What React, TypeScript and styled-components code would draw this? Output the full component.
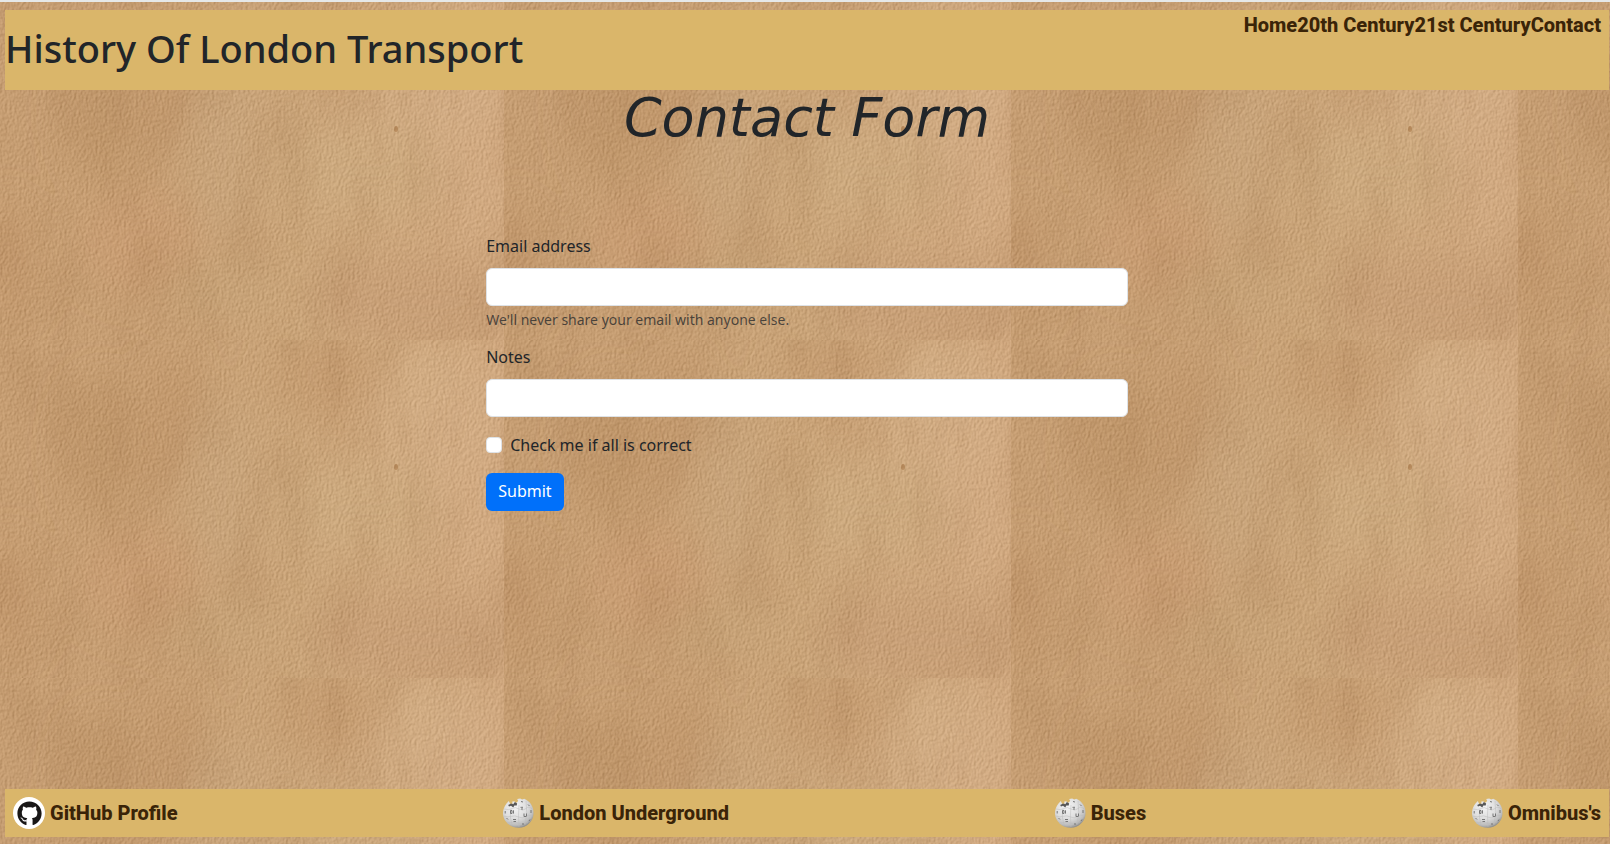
import React from "react";
import styled, { createGlobalStyle } from "styled-components";
import { FaGithub } from "react-icons/fa";

// One 507 x 338 sheet of kraft paper; it repeats over the whole page.
const paperSheet = `
<svg xmlns="http://www.w3.org/2000/svg" width="507" height="338" viewBox="0 0 507 338">
  <defs>
    <linearGradient id="base" x1="0" x2="1" y1="0" y2="0">
      <stop offset="0" stop-color="#c69e73"/>
      <stop offset=".3" stop-color="#c59d72"/>
      <stop offset=".6" stop-color="#c9a479"/>
      <stop offset="1" stop-color="#cea67d"/>
    </linearGradient>
    <filter id="soft" x="-50%" y="-50%" width="200%" height="200%"><feGaussianBlur stdDeviation="18"/></filter>
    <filter id="mottle" x="0" y="0" width="100%" height="100%" color-interpolation-filters="sRGB">
      <feTurbulence type="fractalNoise" baseFrequency=".026 .009" numOctaves="3" seed="8"/>
      <feColorMatrix values="0 0 0 0 .62  0 0 0 0 .45  0 0 0 0 .29  1.6 0 0 0 -.68"/>
    </filter>
    <filter id="grain" x="0" y="0" width="100%" height="100%" color-interpolation-filters="sRGB">
      <feTurbulence type="fractalNoise" baseFrequency=".42 .3" numOctaves="3" seed="3" result="n"/>
      <feColorMatrix in="n" values="0 0 0 0 0  0 0 0 0 0  0 0 0 0 0  1 0 0 0 0" result="h"/>
      <feDiffuseLighting in="h" surfaceScale="1" diffuseConstant="1" lighting-color="#fff" result="l">
        <feDistantLight azimuth="215" elevation="45"/>
      </feDiffuseLighting>
      <feComposite in="SourceGraphic" in2="l" operator="arithmetic" k1="0" k2="1" k3=".2" k4="-.137"/>
    </filter>
  </defs>
  <g filter="url(#grain)">
    <rect width="507" height="338" fill="url(#base)"/>
    <g filter="url(#soft)">
      <ellipse cx="105" cy="110" rx="34" ry="70" fill="#b98f63" opacity=".6"/>
      <ellipse cx="175" cy="80" rx="20" ry="70" fill="#bd9166" opacity=".6"/>
      <ellipse cx="330" cy="35" rx="55" ry="50" fill="#bf9469" opacity=".5"/>
      <ellipse cx="225" cy="150" rx="40" ry="90" fill="#c8a67b" opacity=".5"/>
      <ellipse cx="10" cy="260" rx="30" ry="60" fill="#bd9166" opacity=".5"/>
      <ellipse cx="145" cy="240" rx="60" ry="50" fill="#c99d73" opacity=".6"/>
      <ellipse cx="440" cy="70" rx="60" ry="70" fill="#d1ac84" opacity=".8"/>
      <ellipse cx="370" cy="170" rx="90" ry="45" fill="#ccaa7f" opacity=".7"/>
      <ellipse cx="475" cy="130" rx="45" ry="110" fill="#d1ac84" opacity=".55"/>
      <ellipse cx="430" cy="300" rx="110" ry="45" fill="#c79d75" opacity=".85"/>
      <ellipse cx="220" cy="285" rx="55" ry="30" fill="#c5a276" opacity=".6"/>
    </g>
    <rect width="507" height="338" filter="url(#mottle)" opacity=".24"/>
    <ellipse cx="399" cy="127" rx="2" ry="3" fill="#a07040" opacity=".6"/>
  </g>
</svg>`;

const ink = "#212529";
const brown = "#3a2408";
const brass = "#dab66a";

const GlobalStyle = createGlobalStyle`
  *, *::before, *::after { box-sizing: border-box; }
  body {
    margin: 0;
    border-top: 2px solid #e6e8e8;
    color: ${ink};
    font: 400 16px/24px "Noto Sans", "Open Sans", sans-serif;
    background: #c8a177 url("data:image/svg+xml,${encodeURIComponent(paperSheet).replace(/'/g, "%27")}") -3px 2px;
  }
`;

const Page = styled.div`
  min-height: calc(100vh - 2px);
  padding: 8px 1px 7px 5px;
  display: flex;
  flex-direction: column;
`;

const Header = styled.header`
  display: flex;
  justify-content: space-between;
  align-items: flex-start;
  background: ${brass};
`;

const SiteTitle = styled.h1`
  margin: 14px 0 18px;
  font-size: 38px;
  line-height: 48px;
  font-weight: 500;
`;

const Nav = styled.nav`
  display: flex;
  padding-right: 8px;
`;

const BoldLink = styled.a`
  display: flex;
  align-items: center;
  gap: 5px;
  color: ${brown};
  font-family: Roboto, "Noto Sans", sans-serif;
  font-size: 20px;
  line-height: 30px;
  font-weight: 800;
  text-decoration: none;
`;

const Main = styled.main`
  flex: 1;
`;

const PageTitle = styled.h2`
  margin: 0 0 88px;
  font: italic 400 54px/56px "DejaVu Sans", sans-serif;
  text-align: center;
`;

const Form = styled.form`
  width: 40%;
  margin: 0 auto;
  display: flex;
  flex-direction: column;
  gap: 16px;
`;

const Field = styled.div`
  display: flex;
  flex-direction: column;
`;

const Label = styled.label`
  margin-bottom: 10px;
`;

const Input = styled.input`
  width: 100%;
  height: 38px;
  padding: 6px 12px;
  border: 1px solid #dee2e6;
  border-radius: 6px;
  background: #fff;
  color: ${ink};
  font: inherit;
`;

const Hint = styled.small`
  margin: 3px 0 -1px;
  font-size: 14px;
  line-height: 21px;
  color: rgba(33, 37, 41, 0.75);
`;

const CheckRow = styled.label`
  display: flex;
  align-items: center;
  gap: 8px;
`;

const Checkbox = styled.input`
  appearance: none;
  width: 16px;
  height: 16px;
  margin: 0;
  border: 1px solid #dee2e6;
  border-radius: 4px;
  background: #fff;

  &:checked {
    background: #0d6efd;
  }
`;

const Submit = styled.button`
  align-self: flex-start;
  height: 38px;
  padding: 0 12px 2px;
  border: 0;
  border-radius: 6px;
  background: #0070fa;
  color: #fff;
  font: inherit;
`;

const Footer = styled.footer`
  display: flex;
  justify-content: space-between;
  align-items: center;
  padding: 8px;
  background: ${brass};
`;

const Badge = styled.span`
  display: flex;
  align-items: center;
  justify-content: center;
  width: 32px;
  height: 32px;
  border-radius: 50%;
  background: #fff;
  color: #191717;
`;

function WikiGlobe({ id }: { id: string }) {
  return (
    <svg width="32" height="32" viewBox="0 0 32 32" aria-hidden="true">
      <defs>
        <radialGradient id={id} cx=".4" cy=".3" r=".72">
          <stop offset="0" stopColor="#f4f4f4" />
          <stop offset=".55" stopColor="#dedede" />
          <stop offset=".85" stopColor="#bcbcbc" />
          <stop offset="1" stopColor="#8d8d8d" />
        </radialGradient>
      </defs>
      <path
        d="M4.5 6.5 6.8 4l1.4 3 2.6-.6L10 4.8l2.2-.5L14 6l2.2-2.1-1-1.9 3-.6 2 1.2 2-.8C28 4.200 32 9.500 31.500 17 31 25 24.500 30.700 17 30.800 8.500 31 1.500 24.500 1 17 .9 13 2.200 9.400 4.500 6.500Z"
        fill={`url(#${id})`}
      />
      <path d="m6.200 8 3-1.500 2 .8 1.700-2.200 2.200 1.300-.4 2-2.400.2-1 1.800-2.300-1.600-2 .7Z" fill="#575757" />
      <path
        d="M2 12q5 1.500 8-.5t7 .5 7-.5 6 .5M1.500 19q5 1.500 8 .3t7 .7 7-.5 7-.5M5 26q6-1.500 11 0t10-.5M9 12q-2 7 1 16M17 8q-1 10 0 22M24 4q2 12-1 24"
        fill="none"
        stroke="#bbb"
        strokeWidth=".5"
      />
      <g fill="none" stroke="#777" strokeWidth="1">
        <path d="M8.500 13.500h1.500v3H8.500ZM11.500 13.300v3.300M22 16.500v3M24.500 16.500v3M22 19.500h2M11 22.500h3M11.500 24.500h2.500M18.500 10.300h2.500M19 12h2M3.200 14v2.500M29 13v3M26 7.500l1.500 1.500M20 27h2M4.500 21l1.500 1.500M27 24l1-1.500M19 4.500l2 .5" />
      </g>
    </svg>
  );
}

const navItems = ["Home", "20th Century", "21st Century", "Contact"];
const wikiItems = ["London Underground", "Buses", "Omnibus's"];

export default function App() {
  return (
    <>
      <GlobalStyle />
      <Page>
        <Header>
          <SiteTitle>History Of London Transport</SiteTitle>
          <Nav>
            {navItems.map((item) => (
              <BoldLink key={item} href="#">
                {item}
              </BoldLink>
            ))}
          </Nav>
        </Header>
        <Main>
          <PageTitle>Contact Form</PageTitle>
          <Form onSubmit={(e) => e.preventDefault()}>
            <Field>
              <Label htmlFor="email">Email address</Label>
              <Input id="email" type="email" aria-describedby="email-hint" />
              <Hint id="email-hint">We'll never share your email with anyone else.</Hint>
            </Field>
            <Field>
              <Label htmlFor="notes">Notes</Label>
              <Input id="notes" type="text" />
            </Field>
            <CheckRow htmlFor="correct">
              <Checkbox id="correct" type="checkbox" />
              Check me if all is correct
            </CheckRow>
            <Submit type="submit">Submit</Submit>
          </Form>
        </Main>
        <Footer>
          <BoldLink href="#">
            <Badge>
              <FaGithub size={25} aria-hidden="true" />
            </Badge>
            GitHub Profile
          </BoldLink>
          {wikiItems.map((item, i) => (
            <BoldLink key={item} href="#">
              <WikiGlobe id={`globe-${i}`} />
              {item}
            </BoldLink>
          ))}
        </Footer>
      </Page>
    </>
  );
}
